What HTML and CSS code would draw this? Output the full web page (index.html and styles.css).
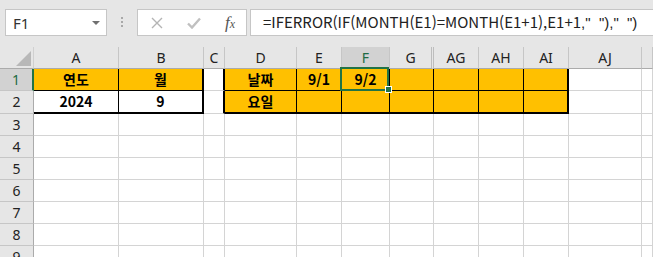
FILE: index.html
```html
<!DOCTYPE html>
<html lang="ko">
<head>
  <meta charset="UTF-8" />
  <title>Excel - 날짜</title>
  <link rel="stylesheet" href="styles.css">
</head>
<body>

  <div class="toolbar">
    <div class="namebox">
      <span>F1</span>
      <svg class="caret" width="8" height="4" viewBox="0 0 8 4"><path d="M0 0h8L4 4z" fill="#707070"/></svg>
    </div>
    <div class="grip"><i></i><i></i><i></i></div>
    <div class="buttons">
      <svg width="12" height="12" viewBox="0 0 12 12"><path d="M1 1l10 10M11 1L1 11" stroke="#b4b4b4" stroke-width="1.4"/></svg>
      <svg width="14" height="12" viewBox="0 0 14 12"><path d="M1 6.5l4 4L13 1.5" stroke="#c0c0c0" stroke-width="2.4" fill="none"/></svg>
      <span class="fx"><i>f</i><i class="x">x</i></span>
    </div>
    <div class="formula">=IFERROR(IF(MONTH(E1)=MONTH(E1+1),E1+1<span class="q">,"  "),"  ")</span></div>
  </div>

  <div class="sheet">
    <div class="row head">
      <div class="corner"><svg width="15" height="15" viewBox="0 0 15 15"><path d="M15 0V15H0z" fill="#b8b8b8"/></svg></div>
      <div class="ch">A</div>
      <div class="ch">B</div>
      <div class="ch">C</div>
      <div class="ch">D</div>
      <div class="ch">E</div>
      <div class="ch sel">F</div>
      <div class="ch hidden">G</div>
      <div class="ch">AG</div>
      <div class="ch">AH</div>
      <div class="ch">AI</div>
      <div class="ch">AJ</div>
      <div class="ch"></div>
    </div>

    <div class="row">
      <div class="rh sel">1</div>
      <div class="c y br bb">연도</div>
      <div class="c y tr bb">월</div>
      <div class="c tr"></div>
      <div class="c y br bb">날짜</div>
      <div class="c y br bb">9/1</div>
      <div class="c y br bb active">9/2<span class="handle"></span></div>
      <div class="c y br bb"></div>
      <div class="c y br bb"></div>
      <div class="c y br bb"></div>
      <div class="c y tr bb"></div>
      <div class="c"></div>
      <div class="c"></div>
    </div>

    <div class="row tall">
      <div class="rh">2</div>
      <div class="c bold br tb">2024</div>
      <div class="c bold tr tb">9</div>
      <div class="c tr"></div>
      <div class="c y br tb">요일</div>
      <div class="c y br tb"></div>
      <div class="c y br tb"></div>
      <div class="c y br tb"></div>
      <div class="c y br tb"></div>
      <div class="c y br tb"></div>
      <div class="c y tr tb"></div>
      <div class="c"></div>
      <div class="c"></div>
    </div>

    <div class="row"><div class="rh">3</div><div class="c"></div><div class="c"></div><div class="c"></div><div class="c"></div><div class="c"></div><div class="c"></div><div class="c"></div><div class="c"></div><div class="c"></div><div class="c"></div><div class="c"></div><div class="c"></div></div>
    <div class="row"><div class="rh">4</div><div class="c"></div><div class="c"></div><div class="c"></div><div class="c"></div><div class="c"></div><div class="c"></div><div class="c"></div><div class="c"></div><div class="c"></div><div class="c"></div><div class="c"></div><div class="c"></div></div>
    <div class="row"><div class="rh">5</div><div class="c"></div><div class="c"></div><div class="c"></div><div class="c"></div><div class="c"></div><div class="c"></div><div class="c"></div><div class="c"></div><div class="c"></div><div class="c"></div><div class="c"></div><div class="c"></div></div>
    <div class="row"><div class="rh">6</div><div class="c"></div><div class="c"></div><div class="c"></div><div class="c"></div><div class="c"></div><div class="c"></div><div class="c"></div><div class="c"></div><div class="c"></div><div class="c"></div><div class="c"></div><div class="c"></div></div>
    <div class="row"><div class="rh">7</div><div class="c"></div><div class="c"></div><div class="c"></div><div class="c"></div><div class="c"></div><div class="c"></div><div class="c"></div><div class="c"></div><div class="c"></div><div class="c"></div><div class="c"></div><div class="c"></div></div>
    <div class="row"><div class="rh">8</div><div class="c"></div><div class="c"></div><div class="c"></div><div class="c"></div><div class="c"></div><div class="c"></div><div class="c"></div><div class="c"></div><div class="c"></div><div class="c"></div><div class="c"></div><div class="c"></div></div>
    <div class="row"><div class="rh">9</div><div class="c"></div><div class="c"></div><div class="c"></div><div class="c"></div><div class="c"></div><div class="c"></div><div class="c"></div><div class="c"></div><div class="c"></div><div class="c"></div><div class="c"></div><div class="c"></div></div>
  </div>

</body>
</html>
```

FILE: styles.css
```css
body {
  margin: 0;
  width: 653px;
  height: 257px;
  overflow: hidden;
  background: #fff;
  font-family: "Noto Sans", "Noto Sans CJK KR", sans-serif;
  color: #222;
}

/* formula bar */
.toolbar {
  display: flex;
  height: 47px;
  box-sizing: border-box;
  padding: 9px 0 0 5px;
  background: #e6e6e6;
}

.toolbar > div {
  flex-shrink: 0;
}

.namebox,
.buttons,
.formula {
  height: 27px;
  box-sizing: border-box;
  background: #fff;
  border: 1px solid #c6c6c6;
}

.namebox {
  width: 102px;
  display: flex;
  align-items: center;
  justify-content: space-between;
  padding: 0 6px 0 7px;
  font-size: 15px;
  color: #333;
}

.caret {
  margin-top: 1px;
}

.grip {
  width: 30px;
  display: flex;
  flex-direction: column;
  align-items: center;
  gap: 2px;
  padding-top: 8px;
  box-sizing: border-box;
}

.grip i {
  width: 2px;
  height: 2px;
  background: #a8a8a8;
}

.buttons {
  width: 110px;
  display: flex;
  align-items: center;
  padding-left: 13px;
  gap: 24px;
}

.fx {
  font-family: "Liberation Serif", serif;
  font-size: 17px;
  color: #555;
}

.fx .x {
  font-size: 12px;
}

.toolbar .formula {
  flex: 1 0 0;
  min-width: 0;
  overflow: hidden;
  margin-left: 3px;
  margin-right: -2px;
  padding-left: 12px;
  font-family: "Noto Sans CJK KR", sans-serif;
  font-size: 15px;
  line-height: 24px;
  white-space: pre;
  color: #222;
}

.formula .q {
  font-family: "Liberation Sans", sans-serif;
}

/* grid */
.row {
  display: grid;
  grid-template-columns: 34px 85px 85px 21px 72px 45px 48px 44px 45px 45px 45px 73px 1fr;
  height: 22px;
}

.row.tall {
  height: 23px;
}

.row > div {
  box-sizing: border-box;
}

.head > div {
  background: #e6e6e6;
  border-right: 1px solid #c6c6c6;
  border-bottom: 1px solid #ababab;
  text-align: center;
  font-size: 14px;
  line-height: 21px;
  color: #222;
}

.head .corner {
  display: flex;
  align-items: flex-end;
  justify-content: flex-end;
  padding: 0 2px 2px 0;
  border-right-color: #d0d0d0;
}

.corner svg {
  display: block;
}

.head .hidden {
  border-right: 3px double #bdbdbd;
}

.ch.sel {
  background: #d2d2d2;
  color: #1e6b43;
}

.rh {
  background: #e6e6e6;
  border-right: 1px solid #ababab;
  border-bottom: 1px solid #c6c6c6;
  text-align: center;
  font-size: 14px;
  line-height: 21px;
}

.rh.sel {
  background: #d2d2d2;
  border-right: 2px solid #217346;
  color: #1e6b43;
}

.c {
  border-right: 1px solid #d4d4d4;
  border-bottom: 1px solid #d4d4d4;
  text-align: center;
  font-family: "Noto Sans CJK KR", sans-serif;
  font-weight: bold;
  font-size: 14px;
  line-height: 21px;
  color: #000;
}

.y {
  background: #ffc000;
}

.br {
  border-right-color: #000;
}

.bb {
  border-bottom-color: #000;
}

.tr {
  border-right: 2px solid #000;
}

.tb {
  border-bottom: 2px solid #000;
}

/* active cell */
.active {
  position: relative;
}

.active::after {
  content: '';
  position: absolute;
  left: -2px;
  top: -2px;
  right: 0;
  bottom: -1px;
  border: 2px solid #217346;
}

.handle {
  position: absolute;
  left: 43px;
  top: 17px;
  width: 7px;
  height: 7px;
  box-sizing: border-box;
  background: #217346;
  border: 1px solid #fff;
  z-index: 2;
}
```
